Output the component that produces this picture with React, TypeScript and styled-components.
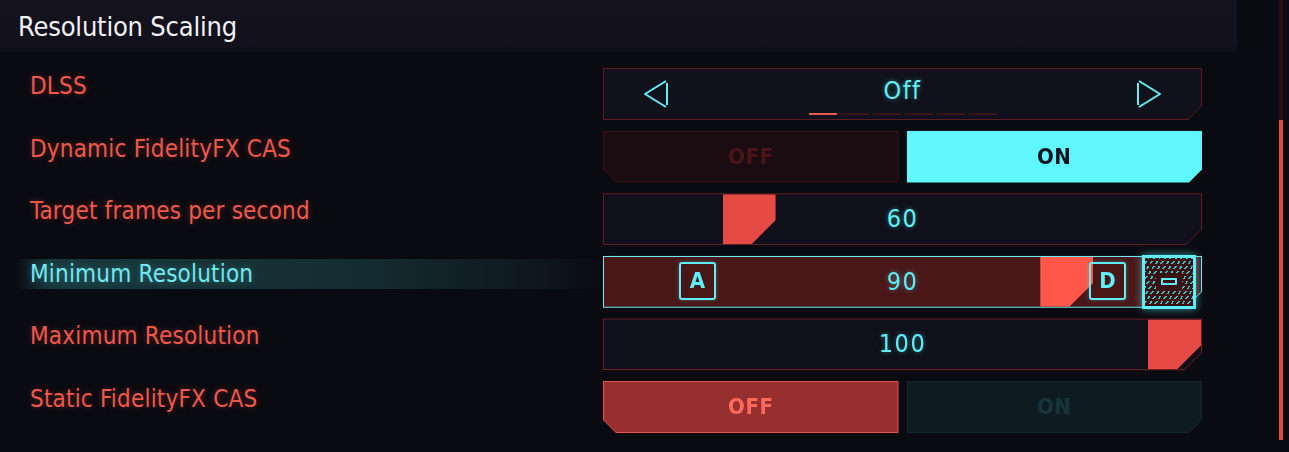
import React from "react";
import styled, { createGlobalStyle, css } from "styled-components";

const FONT = `"Liberation Sans Narrow", "DejaVu Sans Condensed", "Liberation Sans", sans-serif`;
const CYAN = "#5ff0f6";
const RED = "#f0584c";

const Global = createGlobalStyle`
  html, body { margin: 0; padding: 0; background: #0a0b11; }
  body { width: 1289px; height: 452px; overflow: hidden; font-family: ${FONT}; }
`;

type Cut = "br" | "bl" | "none";
const clip = (cut: Cut, n: number) => {
  if (cut === "br")
    return `polygon(0 0, 100% 0, 100% calc(100% - ${n}px), calc(100% - ${n}px) 100%, 0 100%)`;
  if (cut === "bl")
    return `polygon(0 0, 100% 0, 100% 100%, ${n}px 100%, 0 calc(100% - ${n}px))`;
  return "none";
};

const Page = styled.div`
  display: flex;
  width: 1289px;
  height: 452px;
  background: #0a0b11;
`;

const Main = styled.div`
  width: 1237px;
  display: flex;
  flex-direction: column;
`;

const Header = styled.div`
  height: 52px;
  display: flex;
  align-items: center;
  padding-left: 18px;
  background: linear-gradient(180deg, #13121d 0%, #13121c 85%, #0e0e16 100%);
`;

const Title = styled.h1`
  margin: 0;
  font-family: ${FONT};
  font-weight: 400;
  font-size: 27px;
  letter-spacing: -0.2px;
  color: #f1f1f4;
  line-height: 1;
`;

const Rows = styled.div`
  display: flex;
  flex-direction: column;
  padding-top: 16px;
`;

const Row = styled.div`
  display: grid;
  grid-template-columns: 603px 599px;
  height: 62.6px;
  align-items: start;
`;

const Label = styled.div<{ $active?: boolean }>`
  margin-top: 3px;
  margin-left: 15px;
  padding-left: 15px;
  height: 30px;
  line-height: 30px;
  font-size: 24px;
  letter-spacing: 0.2px;
  color: ${RED};
  text-shadow: 0 0 6px rgba(240, 80, 70, 0.35);
  ${(p) =>
    p.$active &&
    css`
      color: #72e9f1;
      text-shadow: 0 0 6px rgba(100, 230, 240, 0.35);
      background: linear-gradient(
        90deg,
        rgba(30, 70, 75, 0) 0%,
        rgba(30, 72, 76, 0.75) 6%,
        rgba(24, 58, 62, 0.7) 60%,
        rgba(20, 44, 48, 0.35) 90%,
        rgba(20, 40, 44, 0) 100%
      );
    `}
`;

const Frame = styled.div<{ $border: string; $cut: Cut; $n: number; $glow?: string }>`
  height: 52px;
  padding: 1px;
  box-sizing: border-box;
  background: ${(p) => p.$border};
  clip-path: ${(p) => clip(p.$cut, p.$n)};
  filter: ${(p) => (p.$glow ? `drop-shadow(0 0 6px ${p.$glow})` : "none")};
`;

const Inner = styled.div<{ $fill: string; $cut: Cut; $n: number }>`
  position: relative;
  height: 100%;
  background: ${(p) => p.$fill};
  clip-path: ${(p) => clip(p.$cut, p.$n)};
  display: flex;
  align-items: center;
  justify-content: center;
`;

/* DLSS selector */
const Selector = styled(Inner)`
  justify-content: space-between;
  align-items: flex-start;
  padding: 0 38px 0 38px;
  box-sizing: border-box;
`;

const ArrowBox = styled.div`
  height: 100%;
  display: flex;
  align-items: center;
`;

const Center = styled.div`
  display: flex;
  flex-direction: column;
  align-items: center;
  padding-top: 8px;
`;

const Value = styled.span`
  font-family: ${FONT};
  font-size: 25px;
  line-height: 28px;
  letter-spacing: 1.5px;
  color: ${CYAN};
  text-shadow: 0 0 5px rgba(95, 240, 246, 0.45);
  position: relative;
  z-index: 2;
`;

const Dashes = styled.div`
  display: flex;
  gap: 4px;
  margin-top: 8px;
`;

const Dash = styled.div<{ $on?: boolean }>`
  width: 28px;
  height: 2px;
  background: ${(p) => (p.$on ? "#ec5a4f" : "#3b1519")};
`;

/* Toggles */
const Toggle = styled.div`
  display: grid;
  grid-template-columns: 1fr 1fr;
  gap: 8px;
  height: 52px;
`;

const ToggleText = styled.span<{ $color: string }>`
  font-family: ${FONT};
  font-weight: 700;
  font-size: 22px;
  letter-spacing: 0.5px;
  color: ${(p) => p.$color};
`;

/* Sliders */
const Thumb = styled.div<{ $color: string }>`
  position: absolute;
  top: 0;
  bottom: 0;
  width: 53px;
  background: ${(p) => p.$color};
  clip-path: polygon(0 0, 100% 0, 100% calc(100% - 24px), calc(100% - 24px) 100%, 0 100%);
`;

const Key = styled.div`
  position: absolute;
  top: 5px;
  width: 37px;
  height: 38px;
  box-sizing: border-box;
  border: 2px solid ${CYAN};
  border-radius: 3px;
  display: flex;
  align-items: center;
  justify-content: center;
  font-family: ${FONT};
  font-weight: 700;
  font-size: 22px;
  color: ${CYAN};
  z-index: 2;
  box-shadow: 0 0 4px rgba(95, 240, 246, 0.3);
`;

const SliderWrap = styled.div`
  position: relative;
  height: 52px;
`;

const MinusButton = styled.div`
  position: absolute;
  left: 539px;
  top: -1px;
  width: 54px;
  height: 54px;
  box-sizing: border-box;
  border: 3px solid ${CYAN};
  box-shadow: 0 0 8px rgba(95, 240, 246, 0.6);
  background:
    repeating-linear-gradient(0deg, #3a1315 0 2px, transparent 2px 5px),
    repeating-linear-gradient(-55deg, #4cc0c8 0 1.5px, #3a1315 1.5px 4.5px);
  display: flex;
  align-items: center;
  justify-content: center;
  z-index: 3;
`;

const MinusPad = styled.div`
  width: 26px;
  height: 18px;
  background: #3a1315;
  display: flex;
  align-items: center;
  justify-content: center;
`;

const MinusGlyph = styled.div`
  width: 16px;
  height: 7px;
  box-sizing: border-box;
  border: 2px solid ${CYAN};
  border-radius: 1px;
`;

const Gutter = styled.div`
  flex: 1;
  display: flex;
  padding-left: 42px;
`;

const Scroll = styled.div`
  width: 4px;
  height: 452px;
  display: flex;
  flex-direction: column;
`;

const ScrollTrack = styled.div`
  height: 120px;
  background: #2c0d11;
`;

const ScrollThumb = styled.div`
  height: 320px;
  background: #e84a40;
`;

const LeftArrow = () => (
  <svg width="28" height="32" viewBox="0 0 28 32">
    <path d="M24 3 L3 16 L24 29" fill="none" stroke={CYAN} strokeWidth="2" strokeLinejoin="round" />
    <path d="M25 5 L25 27" fill="none" stroke={CYAN} strokeWidth="2" />
  </svg>
);

const RightArrow = () => (
  <svg width="28" height="32" viewBox="0 0 28 32">
    <path d="M4 3 L25 16 L4 29" fill="none" stroke={CYAN} strokeWidth="2" strokeLinejoin="round" />
    <path d="M3 5 L3 27" fill="none" stroke={CYAN} strokeWidth="2" />
  </svg>
);

const THUMB_W = 53;
const thumbLeft = (frac: number) => `calc((100% - ${THUMB_W}px) * ${frac})`;

export default function App() {
  return (
    <>
      <Global />
      <Page>
        <Main>
          <Header>
            <Title>Resolution Scaling</Title>
          </Header>
          <Rows>
            <Row>
              <Label>DLSS</Label>
              <Frame $border="#5f1c22" $cut="br" $n={14}>
                <Selector $fill="#10111b" $cut="br" $n={13}>
                  <ArrowBox>
                    <LeftArrow />
                  </ArrowBox>
                  <Center>
                    <Value>Off</Value>
                    <Dashes>
                      {[0, 1, 2, 3, 4, 5].map((i) => (
                        <Dash key={i} $on={i === 0} />
                      ))}
                    </Dashes>
                  </Center>
                  <ArrowBox>
                    <RightArrow />
                  </ArrowBox>
                </Selector>
              </Frame>
            </Row>

            <Row>
              <Label>Dynamic FidelityFX CAS</Label>
              <Toggle>
                <Frame $border="#3a1217" $cut="bl" $n={13}>
                  <Inner $fill="#1a0c10" $cut="bl" $n={12}>
                    <ToggleText $color="#4a1519">OFF</ToggleText>
                  </Inner>
                </Frame>
                <Frame $border="#5ff6fc" $cut="br" $n={13} $glow="rgba(95,240,246,0.35)">
                  <Inner $fill="#5ff6fc" $cut="br" $n={12}>
                    <ToggleText $color="#0b1420">ON</ToggleText>
                  </Inner>
                </Frame>
              </Toggle>
            </Row>

            <Row>
              <Label>Target frames per second</Label>
              <Frame $border="#5f1c22" $cut="br" $n={16}>
                <Inner $fill="#0f101a" $cut="br" $n={15}>
                  <Thumb $color="#e64a45" style={{ left: thumbLeft(0.218) }} />
                  <Value>60</Value>
                </Inner>
              </Frame>
            </Row>

            <Row>
              <Label $active>Minimum Resolution</Label>
              <SliderWrap>
                <Frame $border="#6fe8f0" $cut="br" $n={16} $glow="rgba(95,240,246,0.3)">
                  <Inner $fill="#4a1719" $cut="br" $n={15}>
                    <Thumb $color="#ff574a" style={{ left: thumbLeft(0.802) }} />
                    <Key style={{ left: 75 }}>A</Key>
                    <Value>90</Value>
                    <Key style={{ left: 485 }}>D</Key>
                  </Inner>
                </Frame>
                <MinusButton>
                  <MinusPad>
                    <MinusGlyph />
                  </MinusPad>
                </MinusButton>
              </SliderWrap>
            </Row>

            <Row>
              <Label>Maximum Resolution</Label>
              <Frame $border="#6a1e24" $cut="br" $n={18} $glow="rgba(230,70,60,0.35)">
                <Inner $fill="#0f101a" $cut="br" $n={17}>
                  <Thumb $color="#e64a45" style={{ left: thumbLeft(1) }} />
                  <Value>100</Value>
                </Inner>
              </Frame>
            </Row>

            <Row>
              <Label>Static FidelityFX CAS</Label>
              <Toggle>
                <Frame $border="#e0574d" $cut="bl" $n={13} $glow="rgba(230,70,60,0.45)">
                  <Inner $fill="#962f2d" $cut="bl" $n={12}>
                    <ToggleText $color="#ff6a5c">OFF</ToggleText>
                  </Inner>
                </Frame>
                <Frame $border="#14272c" $cut="br" $n={13}>
                  <Inner $fill="#0e1c21" $cut="br" $n={12}>
                    <ToggleText $color="#17343a">ON</ToggleText>
                  </Inner>
                </Frame>
              </Toggle>
            </Row>
          </Rows>
        </Main>
        <Gutter>
          <Scroll>
            <ScrollTrack />
            <ScrollThumb />
          </Scroll>
        </Gutter>
      </Page>
    </>
  );
}
